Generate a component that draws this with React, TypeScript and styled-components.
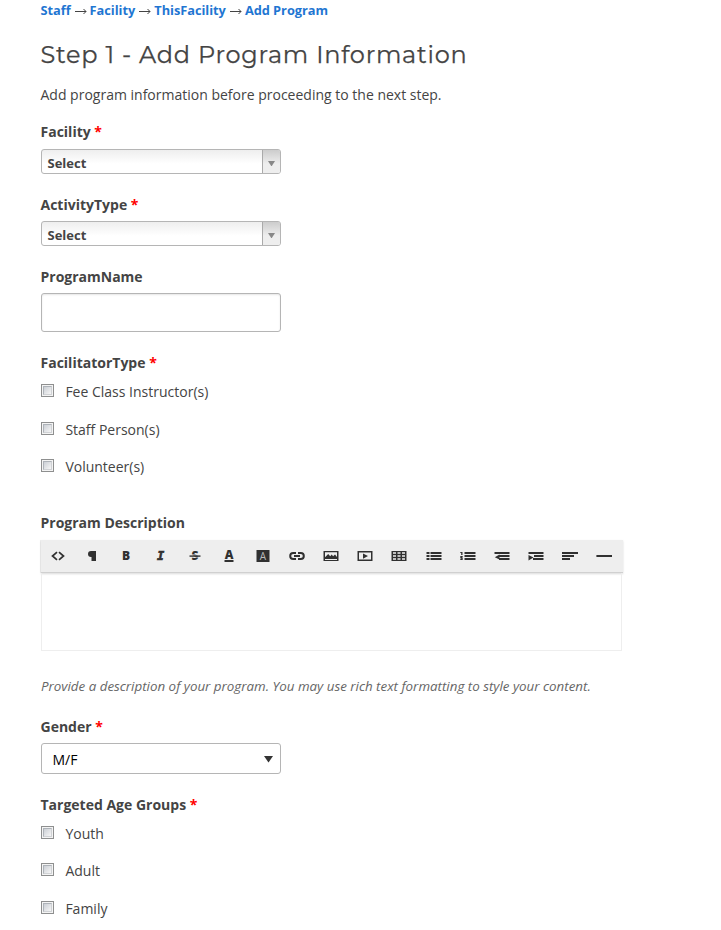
import React from "react";
import styled, { createGlobalStyle, css } from "styled-components";

const GlobalStyle = createGlobalStyle`
  *, *::before { box-sizing: border-box; }
  body { margin: 0; background: #fff; color: #444; font: 14px/20px "Open Sans", sans-serif; }
`;

const Page = styled.main`
  display: flex;
  flex-direction: column;
  align-items: flex-start;
  width: 721px;
  height: 930px;
  padding-left: 41px;
  overflow: hidden;
`;

const Breadcrumb = styled.nav`
  height: 20px;
  margin-left: -0.5px;
  font-size: 12.8px;
  letter-spacing: -0.03px;
  white-space: pre;
`;

const Crumb = styled.a`
  color: #1f76d2;
  font-weight: 700;
  text-decoration: none;
`;

const Arrow = styled.svg`
  width: 19px;
  height: 9px;
  vertical-align: -1px;
  fill: none;
  stroke: #444;
`;

const Title = styled.h1`
  margin: 18px 0 0 -0.5px;
  font: 400 24px/34px Montserrat, Inter, sans-serif;
  letter-spacing: 0.77px;
  -webkit-text-stroke: 0.25px #444;
  white-space: nowrap;
`;

const Intro = styled.p`
  margin: 13px 0 17px -0.5px;
`;

const Field = styled.section<{ $height: number; $gap?: number }>`
  display: flex;
  flex-direction: column;
  flex: none;
  gap: ${(p) => p.$gap ?? 6}px;
  height: ${(p) => p.$height}px;
`;

const Label = styled.label`
  height: 20px;
  flex: none;
  margin-left: -0.5px;
  font-weight: 700;
  white-space: nowrap;
`;

const Star = styled.span`
  color: #f00;
`;

const frame = css`
  width: 240px;
  border: 1px solid #b5b5b5;
  border-radius: 3px;
`;

const Combo = styled.div`
  ${frame}
  display: flex;
  height: 25px;
  background: linear-gradient(#eee, #fff 60%);
  font-size: 13px;
  line-height: 26px;
  font-weight: 700;
  overflow: hidden;
`;

const ComboValue = styled.span`
  flex: 1;
  padding-left: 5.5px;
`;

const ComboButton = styled.span`
  display: flex;
  align-items: center;
  justify-content: center;
  width: 18px;
  padding-top: 4px;
  border-left: 1px solid #aaa;
  background: linear-gradient(#ccc, #eee 60%);
`;

const TextInput = styled.input`
  ${frame}
  height: 39px;
  padding: 0 10px;
  outline: 0;
  box-shadow: inset 0 1px 2px rgba(0, 0, 0, 0.1);
`;

const NativeSelect = styled.div`
  ${frame}
  display: flex;
  align-items: center;
  justify-content: space-between;
  height: 31px;
  padding: 2px 7px 0 10.5px;
  color: #000;
`;

const Option = styled.div<{ $height: number }>`
  display: flex;
  gap: 11.4px;
  height: ${(p) => p.$height}px;
`;

const Check = styled.span`
  flex: none;
  width: 13px;
  height: 13px;
  margin-top: 2px;
  padding: 1px;
  border: 1px solid #8e8f8f;
  background: #f4f4f4;
  &::before {
    content: "";
    display: block;
    width: 9px;
    height: 9px;
    border: 1px solid #aeb3b9;
    border-right-color: #d0d2d5;
    border-bottom-color: #d0d2d5;
    background: linear-gradient(135deg, #cbcfd5, #f6f6f6);
  }
`;

const Toolbar = styled.div`
  display: flex;
  align-items: center;
  width: 582px;
  height: 33px;
  padding: 0;
  border-bottom: 1px solid #d0d0d0;
  background: #eee;
  box-shadow: 0 1px 2px rgba(0, 0, 0, 0.15), -1px 0 0 #f0f0f0;
`;

const Tool = styled.span`
  display: flex;
  justify-content: center;
  flex: 0 0 34.15px;
`;

const Glyph = styled.svg`
  width: 16px;
  height: 16px;
  fill: #303030;
  stroke: none;
  overflow: visible;
`;

const Letter = styled.text`
  font-family: "Noto Sans", sans-serif;
  font-size: 12px;
  font-weight: 900;
  text-anchor: middle;
`;

const SerifItalic = styled.text`
  font: italic 700 12px "DejaVu Sans Mono", monospace;
  stroke: #303030;
  stroke-width: 0.6px;
  text-anchor: middle;
`;

const Editor = styled.div`
  width: 581px;
  height: 78px;
  border: 1px solid #eee;
  border-top: 0;
`;

const Hint = styled.p`
  margin: 0;
  height: 41px;
  color: #666;
  font-size: 13.35px;
  font-style: italic;
  white-space: nowrap;
`;

const bars = (x: number, w: number) =>
  [4, 7, 10].map((y) => <rect key={y} x={x} y={y} width={w} height="2" />);

const tools: [string, React.ReactNode][] = [
  ["HTML", <path d="M7 4.2 2.5 8 7 11.8M9 4.2 13.5 8 9 11.8" fill="none" stroke="#303030" strokeWidth="1.7" />],
  ["Paragraph", <path d="M12 3v10H7.5V9H7a3 3 0 0 1 0-6z" />],
  ["Bold", <Letter x="8" y="12.3">B</Letter>],
  ["Italic", <SerifItalic x="8.6" y="12">I</SerifItalic>],
  ["Strikethrough", <><Letter x="8" y="12.3">S</Letter><path d="M2 6.6h12v.8H2zm0 2.2h12v.6H2z" fill="#eee" /><path d="M2.5 7.4h11v1.4h-11z" /></>],
  ["Text color", <><Letter x="8" y="11">A</Letter><path d="M3.5 12h9v2h-9z" /></>],
  ["Background color", <><path d="M1.5 2h13v12h-13z" /><text x="8" y="11.7" textAnchor="middle" fontFamily="Open Sans, sans-serif" fontSize="10" fill="#bbb">A</text></>],
  ["Link", <path d="M7 5H4.2a3 3 0 0 0 0 6H7M9 5h2.8a3 3 0 0 1 0 6H9M5 8h6" fill="none" stroke="#303030" strokeWidth="2" />],
  ["Image", <path fillRule="evenodd" d="M.5 3h15v10H.5zM2 4.3v5L5.2 6l2 2.2L8.7 6.6l1.4 1.6L12 6.4l2 2.6V4.3zM2 11v.9h12V11z" />],
  ["Video", <path fillRule="evenodd" d="M.5 3h15v10H.5zM2 4.4v7.2h12V4.4zm4 1 5 2.6-5 2.8z" />],
  ["Table", <><rect x=".5" y="3" width="15" height="10" /><path fill="#eee" d="M2 4.2h3v1.6H2zm4.5 0h3v1.6h-3zm4.5 0h3v1.6h-3zM2 7.2h3v1.6H2zm4.5 0h3v1.6h-3zm4.5 0h3v1.6h-3zM2 10.2h3v1.6H2zm4.5 0h3v1.6h-3zm4.5 0h3v1.6h-3z" /></>],
  ["Bulleted list", <>{bars(4.5, 11)}{bars(0.5, 3)}</>],
  ["Numbered list", <>{bars(4.5, 11)}<path d="M.3 4h2.2v3H1.2V5H.3zM.3 8h2.4v1.5l-1 .5h1v2H.3v-1h1v-.6h-1z" /></>],
  ["Outdent", <><rect x=".5" y="4" width="15" height="2" /><rect x="5" y="7" width="10.5" height="2" /><rect x="5" y="10" width="10.5" height="2" /><path d="M0.8 9.2 5.5 6.5v5z" /></>],
  ["Indent", <><rect x=".5" y="4" width="15" height="2" /><rect x="6" y="7" width="9.5" height="2" /><rect x="5" y="10" width="10.5" height="2" /><path d="M.5 7 5.5 9.5l-5 3z" /></>],
  ["Align", <><rect x="0" y="4" width="16" height="2" /><rect x="0" y="7" width="12" height="2" /><rect x="0" y="10" width="8" height="2" /></>],
  ["Horizontal rule", <rect x=".4" y="7" width="15.6" height="2" />],
];

function Triangle({ size, height, color }: { size: number; height: number; color: string }) {
  return (
    <svg width={size} height={height} viewBox="0 0 10 7" preserveAspectRatio="none">
      <path d="M0 0h10L5 7z" fill={color} />
    </svg>
  );
}

function Separator() {
  return (
    <Arrow viewBox="0 0 19 9">
      <path d="M4 4.5h11M12.5 2l2.5 2.5L12.5 7" />
    </Arrow>
  );
}

function Required({ children }: { children: string }) {
  return <Label>{children} <Star>*</Star></Label>;
}

function ComboBox() {
  return (
    <Combo>
      <ComboValue>Select</ComboValue>
      <ComboButton><Triangle size={7} height={5.5} color="#888" /></ComboButton>
    </Combo>
  );
}

function Options({ items }: { items: [string, number][] }) {
  return (
    <div>
      {items.map(([text, height]) => (
        <Option key={text} $height={height}><Check />{text}</Option>
      ))}
    </div>
  );
}

export default function App() {
  const crumbs = ["Staff", "Facility", "ThisFacility", "Add Program"];
  return (
    <Page>
      <GlobalStyle />
      <Breadcrumb>
        {crumbs.map((c, i) => (
          <React.Fragment key={c}>{i > 0 && <Separator />}<Crumb>{c}</Crumb></React.Fragment>
        ))}
      </Breadcrumb>
      <Title>Step 1 - Add Program Information</Title>
      <Intro>Add program information before proceeding to the next step.</Intro>
      <Field $height={73} $gap={7}><Required>Facility</Required><ComboBox /></Field>
      <Field $height={72}><Required>ActivityType</Required><ComboBox /></Field>
      <Field $height={86}><Label>ProgramName</Label><TextInput /></Field>
      <Field $height={160} $gap={9}>
        <Required>FacilitatorType</Required>
        <Options items={[["Fee Class Instructor(s)", 38], ["Staff Person(s)", 37], ["Volunteer(s)", 20]]} />
      </Field>
      <Field $height={163} $gap={7}>
        <Label>Program Description</Label>
        <div>
          <Toolbar>
            {tools.map(([name, art]) => (
              <Tool key={name} aria-label={name}><Glyph viewBox="0 0 16 16">{art}</Glyph></Tool>
            ))}
          </Toolbar>
          <Editor />
        </div>
      </Field>
      <Hint>Provide a description of your program. You may use rich text formatting to style your content.</Hint>
      <Field $height={78}>
        <Required>Gender</Required>
        <NativeSelect>M/F<Triangle size={9} height={6.5} color="#333" /></NativeSelect>
      </Field>
      <Field $height={130} $gap={9}>
        <Required>Targeted Age Groups</Required>
        <Options items={[["Youth", 37], ["Adult", 38], ["Family", 20]]} />
      </Field>
    </Page>
  );
}
